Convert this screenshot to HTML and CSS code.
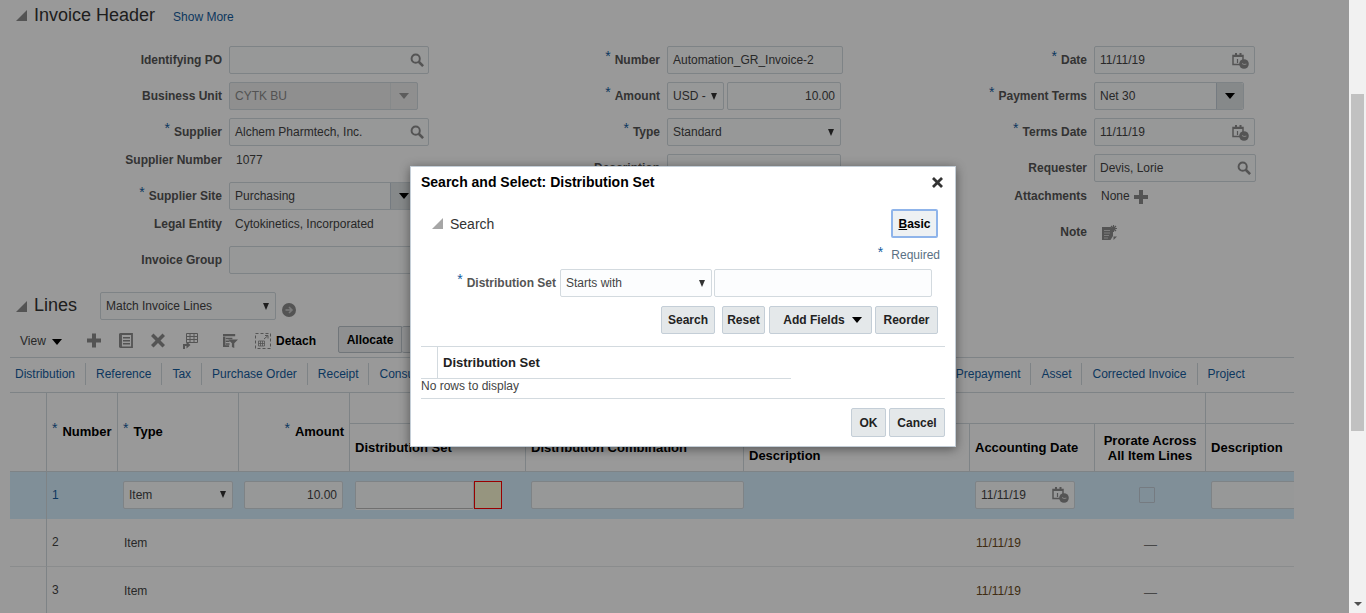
FILE: index.html
```html
<!DOCTYPE html>
<html>
<head>
<meta charset="utf-8">
<title>Create Invoice</title>
<link rel="stylesheet" href="styles.css">
</head>
<body>
<svg class="defs" width="0" height="0">
	<symbol id="i-search" viewBox="0 0 16 16"><circle cx="6.5" cy="6.5" r="4.7" fill="none" stroke="currentColor" stroke-width="2.2"/><path d="M10 10l5 5" stroke="currentColor" stroke-width="3"/></symbol>
	<symbol id="i-cal" viewBox="0 0 17 17"><path d="M1 3.5h10v9H1z" fill="none" stroke="currentColor" stroke-width="1.5"/><path d="M3 1h2v3H3zM7.5 1h2v3h-2zM1 3h10v2H1z" fill="currentColor"/><path d="M5.5 7v4" stroke="currentColor" stroke-width="1.2"/><circle cx="12" cy="12" r="4.8" fill="currentColor"/><path d="M10 11.5l2 1 2.4-.4" stroke="#ddd" stroke-width="1" fill="none"/></symbol>
	<symbol id="i-plus" viewBox="0 0 14 14"><path d="M5 0h4v5h5v4H9v5H5V9H0V5h5z" fill="currentColor"/></symbol>
	<symbol id="i-doc" viewBox="0 0 14 15"><path d="M2 1h11v13.500H2z" fill="none" stroke="currentColor" stroke-width="1.800"/><path d="M0 .5h1.500v14H0zM4 4h7v1.600H4zM4 7h7v1.600H4zM4 10h7v1.600H4z" fill="currentColor"/></symbol>
	<symbol id="i-x" viewBox="0 0 14 14"><path d="M2.5 0L7 4.5 11.500 0 14 2.500 9.500 7 14 11.500 11.500 14 7 9.500 2.500 14 0 11.500 4.500 7 0 2.500z" fill="currentColor"/></symbol>
	<symbol id="i-table" viewBox="0 0 15 16"><path d="M3.500.5h11v9h-11zM3.500 3.500h11M7 .5v9M11 .5v9M3.500 6.500h11" fill="none" stroke="currentColor"/><path d="M0 16v-5h3.500V8.500l4 3.500-4 3.500V13H2v3z" fill="currentColor"/></symbol>
	<symbol id="i-filter" viewBox="0 0 16 15"><path d="M0 0h13v2.500H0zM0 3h2.500v10H0zM0 12h6.500v2H0zM3 4h7v1.500H3zM3 7h4v1.500H3zM3 10h4v1.500H3z" fill="currentColor"/><path d="M5.500 6h10.500l-4 4v5l-2.500-1v-4z" fill="currentColor"/></symbol>
	<symbol id="i-detach" viewBox="0 0 16 16"><path d="M.5 .5h15v15H.5z" fill="none" stroke="currentColor" stroke-dasharray="3 2"/><path d="M3.500 8h6v5h-6zM3.500 10.500h6M5.500 8v5M7.500 8v5" fill="none" stroke="currentColor" stroke-width=".8"/><path d="M9 6l3.500-3M10 2.500h3v3" fill="none" stroke="currentColor"/></symbol>
	<symbol id="i-note" viewBox="0 0 15 15"><path d="M0 2h9.500L11 5v6l-2.500 4H0z" fill="currentColor"/><path d="M2 5.500h6M2 8h6M2 10.500h5M2 13h4" stroke="#d0d0d0"/><path d="M11.500 0v7M8 3.500h7M9 1l5 5M14 1L9 6" stroke="currentColor" stroke-width="1.200"/><path d="M11.500 11.500H15L11.500 15z" fill="currentColor"/></symbol>
	<symbol id="i-go" viewBox="0 0 14 14"><circle cx="7" cy="7" r="7" fill="currentColor"/><path d="M3.500 7h6M7 4l3 3-3 3" fill="none" stroke="#ccc" stroke-width="1.600"/></symbol>
</svg>

<div class="layout">
<div class="page">

	<div class="sec-head">
		<span class="tri"></span>
		<h2 class="sec-title">Invoice Header</h2>
		<a class="show-more">Show More</a>
	</div>

	<div class="hdr-form">
		<div class="col col-1">
			<div class="row"><label class="lbl">Identifying PO</label><div class="box w-200"><span class="grow"></span><svg class="ico-search"><use href="#i-search"/></svg></div></div>
			<div class="row"><label class="lbl">Business Unit</label><div class="box box-off w-189"><span class="grow">CYTK BU</span><span class="drop drop-off"><i class="caret-lg"></i></span></div></div>
			<div class="row"><label class="lbl"><b class="req">*</b>Supplier</label><div class="box w-200"><span class="grow">Alchem Pharmtech, Inc.</span><svg class="ico-search"><use href="#i-search"/></svg></div></div>
			<div class="row row-text"><label class="lbl">Supplier Number</label><span class="val val-num">1077</span></div>
			<div class="row"><label class="lbl"><b class="req">*</b>Supplier Site</label><div class="box w-189"><span class="grow">Purchasing</span><span class="drop"><i class="caret-lg"></i></span></div></div>
			<div class="row row-text"><label class="lbl">Legal Entity</label><span class="val">Cytokinetics, Incorporated</span></div>
			<div class="row"><label class="lbl">Invoice Group</label><div class="box w-200"></div></div>
		</div>
		<div class="col col-2">
			<div class="row"><label class="lbl"><b class="req">*</b>Number</label><div class="box w-176"><span class="grow">Automation_GR_Invoice-2</span></div></div>
			<div class="row"><label class="lbl"><b class="req">*</b>Amount</label><div class="box w-57"><span class="grow">USD -</span><i class="caret"></i></div><div class="box w-114 ml-3 right">10.00</div></div>
			<div class="row"><label class="lbl"><b class="req">*</b>Type</label><div class="box w-174"><span class="grow">Standard</span><i class="caret"></i></div></div>
			<div class="row"><label class="lbl">Description</label><div class="box w-174 tall"></div></div>
		</div>
		<div class="col col-3">
			<div class="row"><label class="lbl"><b class="req">*</b>Date</label><div class="box w-161"><span class="grow">11/11/19</span><svg class="ico-cal"><use href="#i-cal"/></svg></div></div>
			<div class="row"><label class="lbl"><b class="req">*</b>Payment Terms</label><div class="box w-150"><span class="grow">Net 30</span><span class="drop"><i class="caret-lg"></i></span></div></div>
			<div class="row"><label class="lbl"><b class="req">*</b>Terms Date</label><div class="box w-161"><span class="grow">11/11/19</span><svg class="ico-cal"><use href="#i-cal"/></svg></div></div>
			<div class="row"><label class="lbl">Requester</label><div class="box w-162"><span class="grow">Devis, Lorie</span><svg class="ico-search"><use href="#i-search"/></svg></div></div>
			<div class="row row-text"><label class="lbl">Attachments</label><span class="val val-num">None</span><svg class="ico-add"><use href="#i-plus"/></svg></div>
			<div class="row"><label class="lbl">Note</label><svg class="ico-note"><use href="#i-note"/></svg></div>
		</div>
	</div>

	<div class="lines-head">
		<span class="tri"></span>
		<h2 class="sec-title lines-title">Lines</h2>
		<div class="box w-176"><span class="grow">Match Invoice Lines</span><i class="caret"></i></div>
		<svg class="ico-go"><use href="#i-go"/></svg>
	</div>

	<div class="toolbar">
		<span class="tb-view">View</span><i class="caret-lg tb-caret"></i>
		<svg class="tb-ico tb-add"><use href="#i-plus"/></svg>
		<svg class="tb-ico tb-next"><use href="#i-doc"/></svg>
		<svg class="tb-ico tb-next"><use href="#i-x"/></svg>
		<svg class="tb-ico tb-next tb-wide"><use href="#i-table"/></svg>
		<svg class="tb-ico tb-filter tb-wide"><use href="#i-filter"/></svg>
		<svg class="tb-ico tb-detach"><use href="#i-detach"/></svg>
		<span class="tb-text">Detach</span>
		<span class="tb-btn">Allocate</span>
		<span class="tb-btn tb-btn-2"></span>
	</div>

	<div class="tabs">
		<a class="tab tab-first">Distribution</a>
		<a class="tab">Reference</a>
		<a class="tab">Tax</a>
		<a class="tab">Purchase Order</a>
		<a class="tab">Receipt</a>
		<a class="tab">Consumption Advice</a>
		<a class="tab">Manufacturer</a>
		<a class="tab">Intended Use</a>
		<a class="tab">Landed Cost</a>
		<a class="tab tab-filler">Retainage</a>
		<a class="tab">Prepayment</a>
		<a class="tab">Asset</a>
		<a class="tab">Corrected Invoice</a>
		<a class="tab tab-last">Project</a>
	</div>

	<div class="grid-wrap">
		<table class="grid">
			<colgroup>
				<col class="c-36"><col class="c-71"><col class="c-121"><col class="c-111"><col class="c-176">
				<col class="c-218"><col class="c-226"><col class="c-125"><col class="c-111"><col class="c-89">
			</colgroup>
			<thead>
				<tr class="hr-top">
					<th rowspan="2"></th>
					<th rowspan="2"><b class="req">*</b>Number</th>
					<th rowspan="2"><b class="req">*</b>Type</th>
					<th rowspan="2" class="right"><b class="req">*</b>Amount</th>
					<th colspan="5"></th>
					<th class="no-r"></th>
				</tr>
				<tr class="hr-sub">
					<th>Distribution Set</th>
					<th>Distribution Combination</th>
					<th class="th-low">Description</th>
					<th>Accounting Date</th>
					<th class="center">Prorate Across<br>All Item Lines</th>
					<th class="no-r">Description</th>
				</tr>
			</thead>
			<tbody>
				<tr class="r-sel">
					<td class="sep"></td>
					<td><a class="num">1</a></td>
					<td><div class="box w-110"><span class="grow">Item</span><i class="caret"></i></div></td>
					<td><div class="box w-99 right">10.00</div></td>
					<td><div class="dist"><div class="box w-119 box-under"></div><div class="err-box"></div></div></td>
					<td><div class="box w-213"></div></td>
					<td></td>
					<td><div class="box w-100"><span class="grow">11/11/19</span><svg class="ico-cal"><use href="#i-cal"/></svg></div></td>
					<td class="center"><span class="check"></span></td>
					<td><div class="box w-120"></div></td>
				</tr>
				<tr class="r-2">
					<td class="sep"></td>
					<td><span class="num-plain">2</span></td>
					<td class="item">Item</td>
					<td></td><td></td><td></td><td></td>
					<td class="date">11/11/19</td>
					<td class="center dash">—</td>
					<td></td>
				</tr>
				<tr class="r-3">
					<td class="sep"></td>
					<td><span class="num-plain">3</span></td>
					<td class="item">Item</td>
					<td></td><td></td><td></td><td></td>
					<td class="date">11/11/19</td>
					<td class="center dash">—</td>
					<td></td>
				</tr>
			</tbody>
		</table>
	</div>

	<div class="overlay"></div>

	<div class="dialog">
		<div class="dlg-title"><span>Search and Select: Distribution Set</span><span class="dlg-close"><svg class="ico-close"><use href="#i-x"/></svg></span></div>
		<div class="dlg-search">
			<span class="tri tri-sm"></span>
			<span class="dlg-search-t">Search</span>
			<button class="btn btn-focus"><u>B</u>asic</button>
		</div>
		<div class="dlg-req"><b class="req">*</b><span>Required</span></div>
		<div class="dlg-field">
			<label class="dlg-lbl"><b class="req">*</b>Distribution Set</label>
			<div class="box w-152"><span class="grow">Starts with</span><i class="caret"></i></div>
			<div class="box w-218"></div>
		</div>
		<div class="dlg-btns">
			<button class="btn b-search">Search</button>
			<button class="btn b-reset">Reset</button>
			<button class="btn b-add">Add Fields<i class="caret-lg b-caret"></i></button>
			<button class="btn b-reorder">Reorder</button>
		</div>
		<div class="res">
			<div class="res-head"><span class="res-blank"></span><span class="res-th">Distribution Set</span></div>
			<div class="res-empty">No rows to display</div>
		</div>
		<div class="dlg-foot">
			<button class="btn b-ok">OK</button>
			<button class="btn b-cancel">Cancel</button>
		</div>
	</div>
</div>

<div class="scroll">
	<div class="thumb"></div>
	<i class="scroll-arrow"></i>
</div>
</div>
</body>
</html>
```

FILE: styles.css
```css
html, body{ margin:0; padding:0; height:613px; overflow:hidden; background:#fff; }
body{ font-family:"Liberation Sans", Arial, sans-serif; font-size:12px; color:#444; }
.defs{ position:absolute; }
a{ color:#145c9e; }
button{ font-family:inherit; }

.layout{ display:flex; height:613px; }
.page{ position:relative; width:1349px; height:613px; overflow:hidden; flex:none; }

/* page dim + dialog */
.overlay{ position:absolute; left:0; top:0; right:0; bottom:0; background:rgba(0,0,0,.4); z-index:5; }

/* scrollbar */
.scroll{ width:17px; flex:none; background:#f1f1f1; display:flex; flex-direction:column; align-items:center; }
.thumb{ width:13px; height:337px; margin-top:94px; background:#c1c1c1; }
.scroll-arrow{ margin-top:auto; margin-bottom:7px; width:0; height:0; border-left:4px solid transparent; border-right:4px solid transparent; border-top:4px solid #505050; }

/* section headers */
.sec-head{ display:flex; align-items:center; height:30px; padding-left:16px; }
.tri{ width:0; height:0; border-style:solid; border-width:0 0 11px 11px; border-color:transparent transparent #8c8c8c transparent; flex:none; }
.sec-title{ margin:0 0 0 7px; font-size:18px; font-weight:normal; color:#333; }
.show-more{ margin:3px 0 0 18px; }

/* header form */
.hdr-form{ display:flex; margin-top:12px; height:235px; }
.col-1{ width:438px; }
.col-2{ width:427px; }
.col-3{ width:300px; }
.row{ display:flex; align-items:center; height:36px; }
.row-text{ align-items:flex-start; height:28px; }
.lbl{ width:222px; margin-right:7px; text-align:right; font-weight:bold; color:#555; flex:none; }
.row-text .lbl{ line-height:20px; }
.val{ line-height:20px; color:#444; padding-left:6px; }
.val-num{ padding-left:7px; }
.req{ color:#145c9e; font-weight:normal; font-size:14px; line-height:0; margin-right:4px; position:relative; top:-3px; }

.box{ box-sizing:border-box; height:28px; border:1px solid #d3dadf; border-radius:2px; background:#fcfdfe; display:flex; align-items:center; padding-left:5px; color:#444; flex:none; }
.grow{ flex:1; min-width:0; white-space:nowrap; }
.right{ text-align:right; justify-content:flex-end; }
.box.right{ padding-right:5px; }
.ml-3{ margin-left:3px; }
.tall{ height:46px; align-self:flex-start; margin-top:4px; }
.box-off{ background:#eeeeee; color:#8a8a8a; }

.w-57{ width:57px; } .w-99{ width:99px; } .w-100{ width:100px; } .w-110{ width:110px; }
.w-114{ width:114px; } .w-119{ width:119px; } .w-120{ width:120px; } .w-150{ width:150px; }
.w-152{ width:152px; } .w-161{ width:161px; } .w-162{ width:162px; } .w-174{ width:174px; }
.w-176{ width:176px; } .w-189{ width:189px; } .w-200{ width:200px; } .w-213{ width:213px; } .w-218{ width:218px; }

.caret{ width:0; height:0; border-left:3.5px solid transparent; border-right:3.5px solid transparent; border-top:7px solid #333; margin-right:6px; flex:none; }
.caret-lg{ display:inline-block; width:0; height:0; border-left:5px solid transparent; border-right:5px solid transparent; border-top:6px solid #000; flex:none; }
.drop{ box-sizing:border-box; width:27px; height:26px; border-left:1px solid #c4ced7; background:#dfe4e7; display:flex; align-items:center; justify-content:center; border-radius:0 2px 2px 0; }
.drop-off{ background:transparent; border-left-color:#dfe4e7; }
.drop-off .caret-lg{ border-top-color:#9a9a9a; }

.ico-search{ width:14px; height:14px; margin-right:4px; color:#8c8c8c; flex:none; }
.ico-cal{ width:17px; height:17px; margin-right:5px; color:#8c8c8c; flex:none; }
.ico-add{ width:14px; height:14px; margin:4px 0 0 4px; color:#8c8c8c; }
.ico-note{ width:15px; height:15px; margin-left:8px; color:#8c8c8c; }

/* lines */
.lines-head{ display:flex; align-items:center; margin-top:15px; height:28px; padding-left:16px; }
.lines-title{ width:66px; flex:none; margin-bottom:2px; }
.ico-go{ width:14px; height:14px; margin:8px 0 0 6px; color:#8c8c8c; }

.toolbar{ display:flex; align-items:center; box-sizing:border-box; height:32px; margin:6px 55px 0 10px; padding:0 0 2px 10px; border-bottom:1px solid #d3dadf; }
.tb-view{ width:27px; color:#444; }
.tb-caret{ margin:2px 0 0 5px; }
.tb-ico{ width:14px; height:15px; color:#8c8c8c; flex:none; }
.tb-wide{ width:15px; height:16px; }
.tb-add{ margin-left:25px; }
.tb-next{ margin-left:18px; }
.tb-filter{ margin-left:25px; }
.tb-detach{ width:16px; height:16px; margin-left:17px; }
.tb-text{ margin-left:5px; font-weight:bold; color:#000; }
.tb-btn{ box-sizing:border-box; width:64px; height:27px; margin:-2px 0 0 22px; line-height:26px; text-align:center; font-weight:bold; color:#000; border:1px solid #bcc5cc; border-radius:2px 0 0 2px; background:#eef0f2; }
.tb-btn-2{ margin-left:0; border-left:0; }

.tabs{ display:flex; align-items:center; box-sizing:border-box; height:35px; margin:0 55px 0 10px; padding:0 0 2px 5px; border-bottom:1px solid #d3dadf; }
.tab{ padding:0 10px; line-height:22px; border-right:1px solid #d3dadf; white-space:nowrap; }
.tab-first{ padding-left:0; }
.tab-filler{ padding-right:107px; }
.tab-last{ border-right:0; }

/* table */
.grid-wrap{ width:1284px; margin-left:10px; overflow:hidden; }
.grid{ table-layout:fixed; width:1284px; border-collapse:separate; border-spacing:0; }
.c-36{ width:37px; } .c-71{ width:71px; } .c-121{ width:121px; } .c-111{ width:111px; } .c-176{ width:176px; }
.c-218{ width:218px; } .c-226{ width:226px; } .c-125{ width:125px; } .c-89{ width:88px; }
.grid th{ box-sizing:border-box; padding:0 5px; border-right:1px solid #d3dadf; border-bottom:1px solid #d3dadf; font-size:13px; font-weight:bold; color:#000; text-align:left; line-height:15px; }
.grid th.right{ text-align:right; }
.grid th .req{ margin-right:5px; }
.grid th.no-r{ border-right:0; }
.grid th.center, .grid td.center{ text-align:center; }
.grid th.th-low{ padding-top:16px; }
.hr-top th{ height:31px; padding-bottom:2px; }
.hr-sub th{ height:48px; }
.grid td{ box-sizing:border-box; padding:0 5px; overflow:hidden; }
.grid td.sep{ border-right:1px solid #d3dadf; padding:0; }
.grid .r-sel td{ height:47px; padding-bottom:2px; background:#d6eefe; }
.r-2 td{ height:48px; border-bottom:1px solid #e6e9ec; }
.r-3 td{ height:47px; }
.num{ display:block; }
.num-plain{ position:relative; top:-1px; color:#444; }
.grid td.item{ padding-left:6px; color:#444; }
.grid td.date{ padding-left:6px; color:#6a4a20; }
.grid td.dash{ padding-top:4px; font-size:13px; color:#777; }
.dist{ display:flex; }
.box-under{ height:28px; border-bottom:1px solid #bbb; box-shadow:0 1px 0 #fff; }
.err-box{ box-sizing:border-box; width:28px; height:28px; border:1px solid #ff0000; background:#faf8d4; flex:none; }
.check{ display:inline-block; box-sizing:border-box; width:16px; height:16px; margin-right:8px; border:1px solid #c4ced7; border-radius:1px; vertical-align:middle; }

/* dialog */
.dialog{ position:absolute; left:410px; top:166px; width:546px; height:281px; box-sizing:border-box; padding:0 10px; background:#fff; border:1px solid #c4ced7; z-index:6; box-shadow:0 2px 10px rgba(0,0,0,.45); }
.dlg-title{ display:flex; justify-content:space-between; align-items:center; height:30px; font-size:14px; font-weight:bold; color:#000; }
.dlg-close{ display:flex; margin-right:2px; }
.ico-close{ width:11px; height:11px; color:#333; }
.dlg-search{ display:flex; align-items:center; margin-top:12px; height:29px; padding:0 7px 0 11px; }
.tri-sm{ border-color:transparent transparent #a6a6a6 transparent; }
.dlg-search-t{ flex:1; margin-left:7px; font-size:14px; color:#333; }
.dlg-req{ display:flex; justify-content:flex-end; align-items:center; margin-top:9px; height:16px; padding-right:5px; color:#5a7184; }
.dlg-req .req{ margin-right:8px; }
.dlg-field{ display:flex; margin-top:6px; }
.dlg-lbl{ width:135px; margin-right:4px; line-height:28px; text-align:right; font-weight:bold; color:#555; flex:none; }
.dlg-field .w-218{ margin-left:2px; }
.dlg-btns{ display:flex; justify-content:flex-end; margin-top:9px; padding-right:7px; }
.btn{ box-sizing:border-box; height:28px; padding:0; border:1px solid #c4ced7; border-radius:2px; background:#e4e8ea; font-size:12px; font-weight:bold; color:#222; }
.btn-focus{ width:47px; height:29px; border:2px solid #8fb4ea; background:#eef1f3; color:#000; }
.b-search{ width:54px; }
.b-reset{ width:43px; margin-left:7px; }
.b-add{ width:103px; margin-left:4px; padding-left:4px; }
.b-caret{ margin:0 0 2px 7px; vertical-align:middle; }
.b-reorder{ width:63px; margin-left:3px; }
.res{ margin-top:12px; border-top:1px solid #d3dadf; border-bottom:1px solid #d3dadf; height:53px; box-sizing:border-box; }
.res-head{ display:flex; width:370px; height:32px; box-sizing:border-box; border-bottom:1px solid #d3dadf; }
.res-blank{ width:17px; box-sizing:border-box; border-right:1px solid #d3dadf; }
.res-th{ margin-left:5px; line-height:31px; font-size:13px; font-weight:bold; color:#222; }
.res-empty{ line-height:14px; color:#444; }
.dlg-foot{ display:flex; justify-content:flex-end; margin-top:9px; }
.b-ok{ width:35px; height:29px; }
.b-cancel{ width:56px; height:29px; margin-left:3px; }
```
